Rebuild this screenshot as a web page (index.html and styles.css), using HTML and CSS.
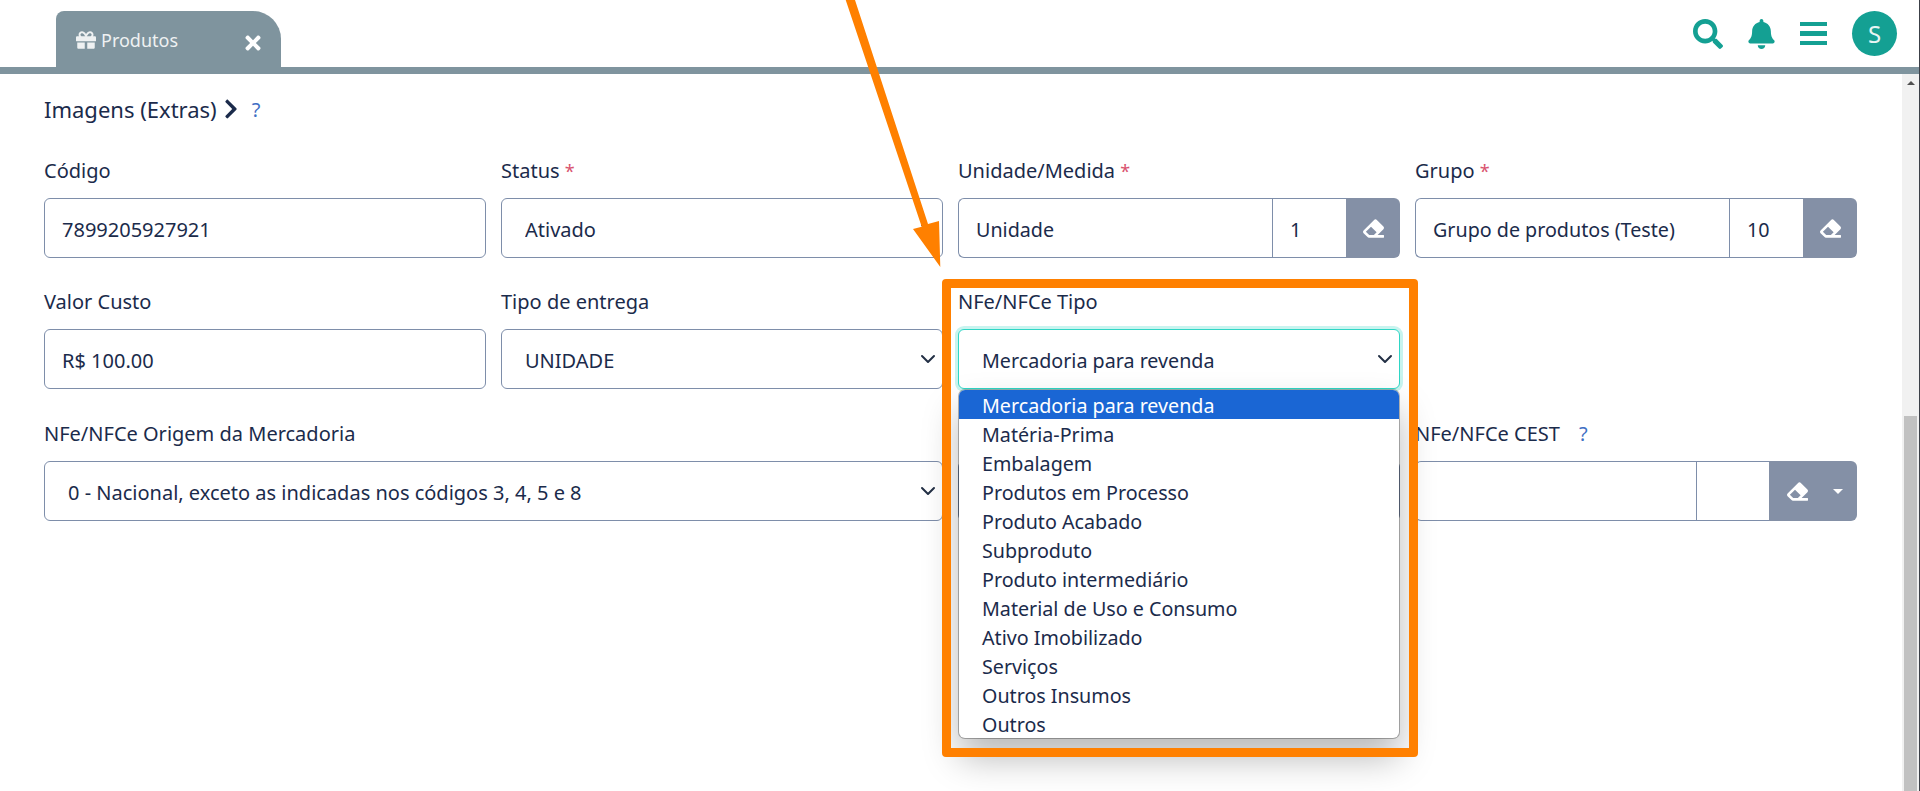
FILE: index.html
```html
<!DOCTYPE html>
<html lang="pt-BR">
<head>
    <meta charset="UTF-8">
    <title>Produtos</title>
    <link rel="stylesheet" href="styles.css">
</head>
<body>
    <header class="topbar">
        <div class="tab">
            <svg class="tab-gift" viewBox="0 0 512 512"><path d="M32 448c0 17.7 14.3 32 32 32h160V320H32v128zm256 32h160c17.7 0 32-14.3 32-32V320H288v160zm192-320h-42.1c6.2-12.1 10.1-25.5 10.1-40 0-48.5-39.5-88-88-88-41.6 0-68.5 21.3-103 68.3-34.5-47-61.4-68.3-103-68.3-48.5 0-88 39.5-88 88 0 14.5 3.8 27.9 10.1 40H32c-17.7 0-32 14.3-32 32v80c0 8.8 7.2 16 16 16h480c8.8 0 16-7.2 16-16v-80c0-17.7-14.3-32-32-32zm-326.1 0c-22.1 0-40-17.9-40-40s17.9-40 40-40c19.9 0 34.6 3.3 86.1 80h-86.1zm206.1 0h-86.1c51.4-76.5 65.7-80 86.1-80 22.1 0 40 17.9 40 40s-17.9 40-40 40z"/></svg>
            <span class="tab-title">Produtos</span>
            <svg class="tab-close" viewBox="0 0 352 512"><path d="M242.72 256l100.07-100.07c12.28-12.28 12.28-32.19 0-44.48l-22.24-22.24c-12.28-12.28-32.19-12.28-44.48 0L176 189.28 75.93 89.21c-12.28-12.28-32.19-12.28-44.48 0L9.21 111.45c-12.28 12.28-12.28 32.19 0 44.48L109.28 256 9.21 356.07c-12.28 12.28-12.28 32.19 0 44.48l22.24 22.24c12.28 12.28 32.2 12.28 44.48 0L176 322.72l100.07 100.07c12.28 12.28 32.2 12.28 44.48 0l22.24-22.24c12.28-12.28 12.28-32.19 0-44.48L242.72 256z"/></svg>
        </div>
        <div class="top-actions">
            <svg class="icon-search" viewBox="0 0 512 512"><path d="M505 442.7L405.3 343c-4.5-4.5-10.6-7-17-7H372c27.6-35.3 44-79.7 44-128C416 93.1 322.9 0 208 0S0 93.1 0 208s93.1 208 208 208c48.3 0 92.7-16.4 128-44v16.3c0 6.4 2.5 12.5 7 17l99.7 99.7c9.4 9.4 24.6 9.4 33.9 0l28.3-28.3c9.4-9.4 9.4-24.6.1-34zM208 336c-70.7 0-128-57.2-128-128 0-70.7 57.2-128 128-128 70.7 0 128 57.2 128 128 0 70.7-57.2 128-128 128z"/></svg>
            <svg class="icon-bell" viewBox="0 0 448 512"><path d="M224 512c35.32 0 63.97-28.65 63.97-64H160.03c0 35.35 28.65 64 63.97 64zm215.39-149.71c-19.32-20.76-55.47-51.99-55.47-154.29 0-77.7-54.48-139.9-127.94-155.16V32c0-17.67-14.32-32-31.98-32s-31.98 14.33-31.98 32v20.84C118.56 68.1 64.08 130.3 64.08 208c0 102.3-36.15 133.53-55.47 154.29-6 6.45-8.66 14.16-8.61 21.71.11 16.4 12.98 32 32.1 32h383.8c19.12 0 32-15.6 32.1-32 .05-7.55-2.61-15.27-8.61-21.71z"/></svg>
            <div class="icon-bars"><span></span><span></span><span></span></div>
            <div class="avatar">S</div>
        </div>
    </header>

    <div class="page">
        <main class="content">
            <div class="section-title">
                Imagens (Extras)
                <svg class="chevron" viewBox="0 0 320 512"><path d="M285.476 272.971L91.132 467.314c-9.373 9.373-24.569 9.373-33.941 0l-22.667-22.667c-9.357-9.357-9.375-24.522-.04-33.901L188.505 256 34.484 101.255c-9.335-9.379-9.317-24.544.04-33.901l22.667-22.667c9.373-9.373 24.569-9.373 33.941 0L285.475 239.03c9.373 9.372 9.373 24.568.001 33.941z"/></svg>
                <span class="help">?</span>
            </div>

            <div class="form-grid">
                <div class="field">
                    <label>Código</label>
                    <input class="control" type="text" value="7899205927921">
                </div>
                <div class="field">
                    <label>Status <span class="req">*</span></label>
                    <select class="control"><option>Ativado</option></select>
                </div>
                <div class="field">
                    <label>Unidade/Medida <span class="req">*</span></label>
                    <div class="lookup">
                        <input class="lookup-text" type="text" value="Unidade">
                        <input class="lookup-id" type="text" value="1">
                        <button class="lookup-btn"><svg class="eraser" viewBox="0 0 512 512"><path d="M497.941 273.941c18.745-18.745 18.745-49.137 0-67.882l-160-160c-18.745-18.745-49.136-18.746-67.883 0l-256 256c-18.745 18.745-18.745 49.137 0 67.882l96 96A48.004 48.004 0 0 0 144 480h356c6.627 0 12-5.373 12-12v-40c0-6.627-5.373-12-12-12H355.883l142.058-142.059zm-302.627-62.627l137.373 137.373L265.373 416H150.628l-80-80 124.686-124.686z"/></svg></button>
                    </div>
                </div>
                <div class="field">
                    <label>Grupo <span class="req">*</span></label>
                    <div class="lookup">
                        <input class="lookup-text" type="text" value="Grupo de produtos (Teste)">
                        <input class="lookup-id" type="text" value="10">
                        <button class="lookup-btn"><svg class="eraser" viewBox="0 0 512 512"><path d="M497.941 273.941c18.745-18.745 18.745-49.137 0-67.882l-160-160c-18.745-18.745-49.136-18.746-67.883 0l-256 256c-18.745 18.745-18.745 49.137 0 67.882l96 96A48.004 48.004 0 0 0 144 480h356c6.627 0 12-5.373 12-12v-40c0-6.627-5.373-12-12-12H355.883l142.058-142.059zm-302.627-62.627l137.373 137.373L265.373 416H150.628l-80-80 124.686-124.686z"/></svg></button>
                    </div>
                </div>

                <div class="field">
                    <label>Valor Custo</label>
                    <input class="control" type="text" value="R$ 100.00">
                </div>
                <div class="field">
                    <label>Tipo de entrega</label>
                    <select class="control"><option>UNIDADE</option></select>
                </div>
                <div class="field field-open">
                    <label>NFe/NFCe Tipo</label>
                    <select class="control control-focus"><option>Mercadoria para revenda</option></select>
                    <ul class="dropdown">
                        <li class="selected">Mercadoria para revenda</li>
                        <li>Matéria-Prima</li>
                        <li>Embalagem</li>
                        <li>Produtos em Processo</li>
                        <li>Produto Acabado</li>
                        <li>Subproduto</li>
                        <li>Produto intermediário</li>
                        <li>Material de Uso e Consumo</li>
                        <li>Ativo Imobilizado</li>
                        <li>Serviços</li>
                        <li>Outros Insumos</li>
                        <li>Outros</li>
                    </ul>
                </div>
                <div class="field"></div>

                <div class="field field-wide">
                    <label>NFe/NFCe Origem da Mercadoria</label>
                    <select class="control"><option>0 - Nacional, exceto as indicadas nos códigos 3, 4, 5 e 8</option></select>
                </div>
                <div class="field">
                    <label>&nbsp;</label>
                    <input class="control" type="text">
                </div>
                <div class="field">
                    <label>NFe/NFCe CEST <span class="help help-cest">?</span></label>
                    <div class="lookup">
                        <input class="lookup-text" type="text">
                        <input class="lookup-id lookup-id-cest" type="text">
                        <button class="lookup-btn lookup-btn-wide">
                            <svg class="eraser" viewBox="0 0 512 512"><path d="M497.941 273.941c18.745-18.745 18.745-49.137 0-67.882l-160-160c-18.745-18.745-49.136-18.746-67.883 0l-256 256c-18.745 18.745-18.745 49.137 0 67.882l96 96A48.004 48.004 0 0 0 144 480h356c6.627 0 12-5.373 12-12v-40c0-6.627-5.373-12-12-12H355.883l142.058-142.059zm-302.627-62.627l137.373 137.373L265.373 416H150.628l-80-80 124.686-124.686z"/></svg>
                            <span class="caret"></span>
                        </button>
                    </div>
                </div>
            </div>
        </main>
        <div class="scrollbar">
            <div class="scroll-arrow"></div>
            <div class="scroll-thumb"></div>
        </div>
    </div>

    <!-- anotacao do print: seta e moldura laranja -->
    <svg class="note-arrow" viewBox="0 0 120 270"><polygon points="5.7,0 15,0 88,224 99,221 100.3,267 73,229 81.7,226.7"/></svg>
    <div class="note-frame"></div>
</body>
</html>
```

FILE: styles.css
```css
* {
    box-sizing: border-box;
}
body {
    margin: 0;
    height: 791px;
    overflow: hidden;
    background: white;
    border-right: 1px solid #3c4048;
    color: #1b2b4b;
    font-family: "Noto Sans", Arial, sans-serif;
    font-size: 20px;
}
.topbar {
    height: 74px;
    border-bottom: 7px solid #7f949e;
    display: flex;
    justify-content: space-between;
    padding: 11px 22px 0 56px;
}
.tab {
    width: 225px;
    height: 56px;
    background: #7f949e;
    border-radius: 8px 28px 0 0;
    color: #eef1f2;
    display: flex;
    align-items: center;
    padding: 0 20px;
    font-size: 18px;
}
.tab-gift {
    width: 20px;
    height: 20px;
    fill: #eef1f2;
    margin: 2px 5px 0 0;
}
.tab-title {
    margin-top: 2px;
}
.tab-close {
    width: 16px;
    height: 22px;
    fill: white;
    margin: 7px 0 0 auto;
}
.top-actions {
    display: flex;
    align-items: center;
    height: 45px;
}
.top-actions svg {
    fill: #14a093;
}
.icon-search {
    width: 30px;
    height: 30px;
}
.icon-bell {
    width: 27px;
    height: 30px;
    margin-left: 25px;
}
.icon-bars {
    width: 27px;
    margin-left: 25px;
    display: flex;
    flex-direction: column;
    gap: 5px;
}
.icon-bars span {
    height: 4.5px;
    background: #14a093;
}
.avatar {
    width: 45px;
    height: 45px;
    margin-left: 25px;
    border-radius: 50%;
    background: #14a093;
    color: #e8f5f3;
    font-size: 24px;
    display: flex;
    align-items: center;
    justify-content: center;
}

.page {
    display: flex;
    height: 717px;
}
.content {
    flex: 1;
    padding: 20px 0 0 44px;
}
.section-title {
    font-size: 22px;
    height: 30px;
    display: flex;
    align-items: center;
}
.chevron {
    width: 14px;
    height: 22px;
    fill: #1b2b4b;
    margin-left: 7px;
}
.help {
    color: #3f6fc4;
    font-size: 20px;
    margin-left: 14px;
}
.form-grid {
    display: grid;
    grid-template-columns: repeat(4, 442px);
    grid-template-rows: 106px 107px 106px;
    column-gap: 15px;
    row-gap: 25px;
    margin-top: 28px;
}
.field {
    position: relative;
    height: 106px;
}
.field-wide {
    grid-column: span 2;
}
label {
    display: block;
    height: 46px;
    line-height: 38px;
}
.req {
    color: #d9536f;
    font-size: 18px;
}
.control {
    display: block;
    width: 100%;
    height: 60px;
    padding: 2px 17px 0;
    border: 1px solid #7e8eaa;
    border-radius: 6px;
    background: white;
    color: #1b2b4b;
    font: inherit;
    outline: none;
}
select.control {
    padding: 2px 40px 0 23px;
    appearance: none;
    background-image: url("data:image/svg+xml,%3csvg xmlns='http://www.w3.org/2000/svg' viewBox='0 0 16 16'%3e%3cpath fill='none' stroke='%23233045' stroke-linecap='round' stroke-linejoin='round' stroke-width='2' d='m2 5 6 6 6-6'/%3e%3c/svg%3e");
    background-repeat: no-repeat;
    background-position: right 6px center;
    background-size: 16px 16px;
}
.control-focus {
    border-color: #2fd6c5;
    box-shadow: 0 0 0 3px #c8f4ef;
    font-size: 19.7px;
}
.dropdown {
    position: absolute;
    z-index: 2;
    top: 107px;
    left: 1px;
    width: 440px;
    margin: 0;
    padding: 0;
    list-style: none;
    background: white;
    border-radius: 6px;
    overflow: hidden;
    font-size: 19.7px;
    box-shadow: 0 0 0 1px rgba(0,0,0,0.28), 0 20px 36px rgba(0,0,0,0.28);
}
.dropdown li {
    height: 29px;
    line-height: 32px;
    padding-left: 23px;
}
.dropdown li.selected {
    background: #1a66d4;
    color: white;
}
.lookup {
    display: flex;
    height: 60px;
}
.lookup input {
    height: 60px;
    border: 1px solid #7e8eaa;
    background: white;
    color: #1b2b4b;
    font: inherit;
    font-size: 19.7px;
    outline: none;
    min-width: 0;
}
.lookup-text {
    flex: 1;
    padding: 2px 17px 0;
    border-right: none !important;
    border-radius: 6px 0 0 6px;
}
.lookup-id {
    width: 74px;
    padding: 2px 17px 0;
    border-right: none !important;
}
.lookup-id-cest {
    width: 73px;
}
.lookup-btn {
    width: 54px;
    border: none;
    border-radius: 0 6px 6px 0;
    background: #8490a6;
    display: flex;
    align-items: center;
    justify-content: center;
    padding: 0;
}
.lookup-btn-wide {
    width: 88px;
    justify-content: flex-start;
    gap: 25px;
    padding-left: 18px;
}
.eraser {
    width: 21px;
    height: 21px;
    fill: white;
}
.caret {
    width: 0;
    height: 0;
    border-left: 5px solid transparent;
    border-right: 5px solid transparent;
    border-top: 5px solid white;
}

.scrollbar {
    width: 17px;
    background: #f1f1f1;
    display: flex;
    flex-direction: column;
}
.scroll-arrow {
    width: 0;
    height: 0;
    margin: 7px auto 0;
    border-left: 4px solid transparent;
    border-right: 4px solid transparent;
    border-bottom: 4px solid #505050;
}
.scroll-thumb {
    margin: 331px 2px 0;
    flex: 1;
    background: #c1c1c1;
}

.note-arrow {
    position: absolute;
    z-index: 3;
    left: 840px;
    top: 0;
    width: 120px;
    height: 270px;
    fill: #ff8000;
}
.note-frame {
    position: absolute;
    z-index: 3;
    left: 942px;
    top: 279px;
    width: 476px;
    height: 478px;
    border: 9px solid #ff8000;
    border-radius: 4px;
}
```
